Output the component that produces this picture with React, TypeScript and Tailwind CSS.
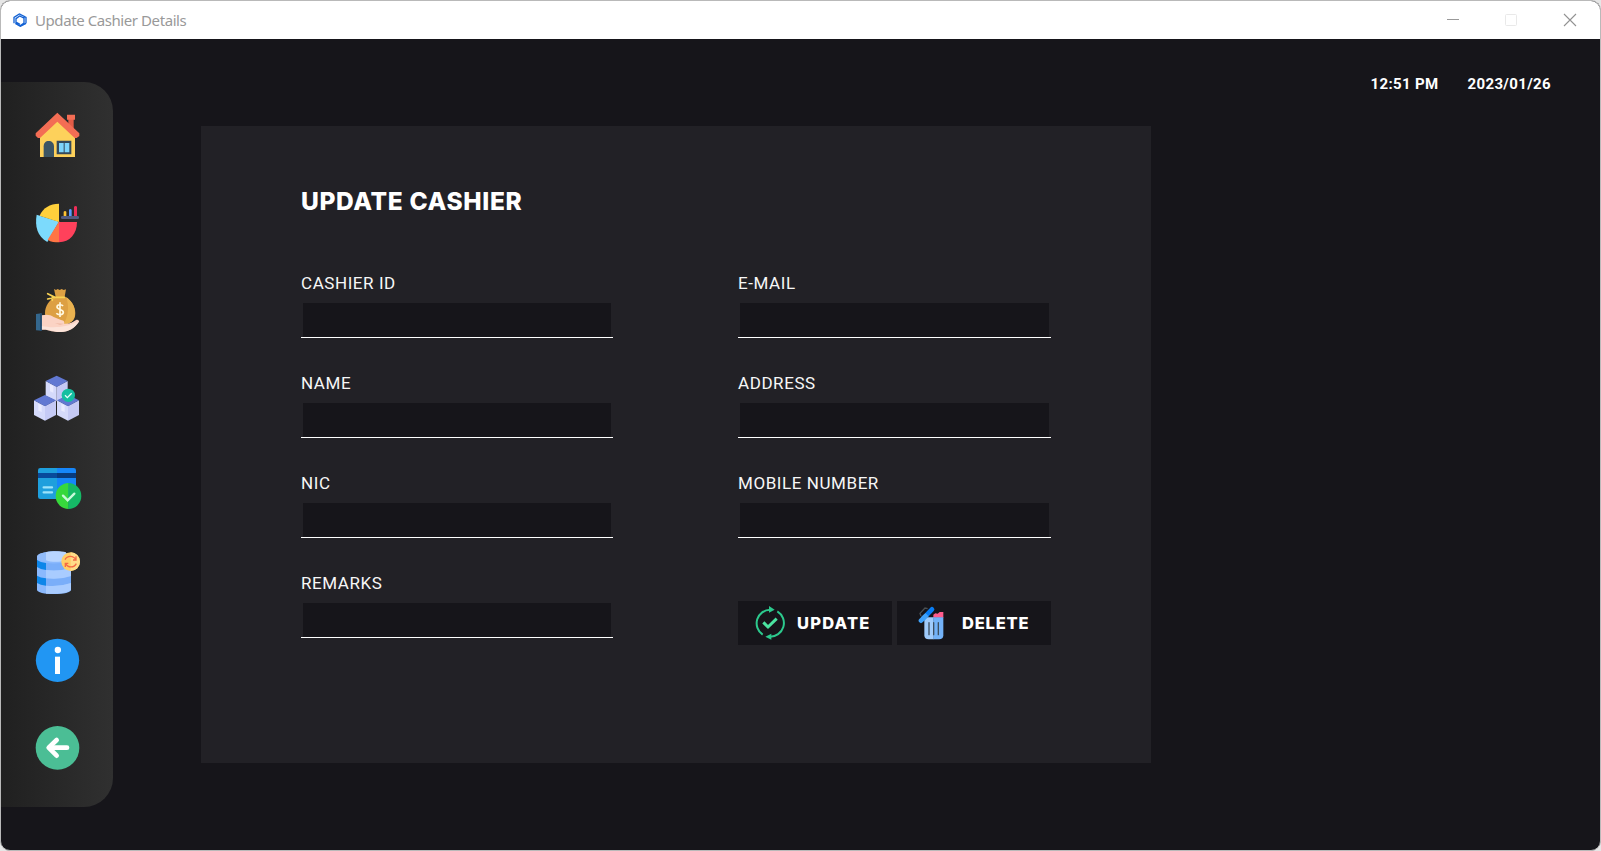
import React from "react";

const HomeIcon = () => (
  <svg className="size-12" viewBox="36 33 144 144">
    <path fill="#e25c47" d="M145 55h16v34l-16-14z" />
    <path fill="#f36d54" d="M141 44h24v15h-24z" />
    <path fill="#fdd15b" d="M60 171V100l52-43 53 43v71z" />
    <path fill="#fbc04f" d="M66 100l47-38 47 38v-8l-47-38-47 38z" />
    <path fill="#f36d54" d="M112 38l66 62v8l-8 6h-6l-52-49-52 49h-6l-7-7v-7z" />
    <path fill="#3c5564" d="M71 171v-32c0-10 6-16 15-16s16 6 16 16v32z" />
    <path fill="#34495a" d="M110 122h44v41h-44z" />
    <path fill="#7ed5fb" d="M117 129h14v28h-14zM134 129h14v28h-14z" />
  </svg>
);

const ChartIcon = () => (
  <svg className="size-12" viewBox="36 297 144 144">
    <path fill="#7cdafc" d="M117 365L50 344c-6 36 2 64 32 82z" />
    <path fill="#ffd03b" d="M117 366V311c-27 0-49 13-58 36z" />
    <path fill="#ff7544" d="M118 363l-35 56c10 7 22 8 34 8z" />
    <path fill="#ff415b" d="M117 366h54c0 36-22 60-54 61z" />
    <path fill="#ffc431" d="M131 335q4-4 8 0v13h-8z" />
    <path fill="#5a9cff" d="M147 329q4-4 8 0v19h-8z" />
    <path fill="#ee2d58" d="M162 320q5-4 9 0v28h-9z" />
    <rect x="123" y="348" width="54" height="9" rx="4" fill="#525b80" />
  </svg>
);

const MoneyIcon = () => (
  <svg className="size-12" viewBox="36 33 144 144">
    <path fill="#dda043" d="M102 42l6 3 5-3 6 3 6-3 6 3 7-2-4 22c18 9 32 27 32 50 0 24-18 35-46 35s-45-12-45-35c0-23 14-41 32-50z" />
    <path fill="#e9b250" d="M138 66c16 10 27 27 27 49 0 22-14 33-37 35 17-20 21-57 10-84z" />
    <path fill="none" stroke="#f9d153" strokeWidth="5" strokeLinecap="round" d="M134 67H105L83 56M105 67l-22 5M97 66v10" />
    <path fill="none" stroke="#fff8df" strokeWidth="5" d="M129 93c-3-5-18-6-18 3 0 9 19 6 19 16 0 9-16 9-21 3M120 82v44" />
    <path fill="#fbd3c4" d="M65 121c14-4 26-2 36 5l22 9c8 1 12 6 9 11 14 2 25-3 36-11 5-3 10 1 9 5-13 19-29 30-54 31-22 1-35-5-46-7H65z" />
    <path fill="#fce4da" d="M65 153c22 4 62 10 112-14-12 20-31 32-57 32-18 0-30-6-43-8H65z" />
    <path fill="#f1bda9" d="M105 144l27 2-12 4z" />
    <path fill="#34678d" d="M48 117l17-2v52l-17-1z" />
    <path fill="#254e70" d="M60 116h5v51h-5z" />
  </svg>
);

const StockIcon = () => {
  const cubes: [number, number][] = [[110, 302], [75, 360], [144, 360]];
  return (
    <svg className="size-12" viewBox="36 297 144 144">
      {cubes.map(([x, y]) => (
        <g key={`${x}-${y}`} transform={`translate(${x} ${y})`}>
          <path fill="#d5dafb" d="M-33 16L0 33v44l-33-17z" />
          <path fill="#c5caf5" d="M33 16L0 33v44l33-17z" />
          <path fill="#6178d2" d="M0 0l33 16L0 34l-33-18z" />
          <path fill="#e9ebff" d="M-20 26l10 5v20l-10-4z" />
        </g>
      ))}
      <circle cx="145" cy="361" r="20" fill="#14bfa0" />
      <path fill="none" stroke="#e8fff9" strokeWidth="4" d="M135 361l7 7 13-13" />
    </svg>
  );
};

const CardIcon = () => (
  <svg className="size-12 overflow-visible" viewBox="36 18 144 144">
    <path fill="#1e9fdd" d="M61 39h50v93H61q-7 0-7-7V46q0-7 7-7z" />
    <path fill="#1686f9" d="M111 39h50q7 0 7 7v86h-57z" />
    <path fill="#084a9b" d="M54 54h57v15H54z" />
    <path fill="#083b7d" d="M111 54h57v15h-57z" />
    <path stroke="#9ce3fb" strokeWidth="7" strokeLinecap="round" d="M71 97h25M71 112h25" />
    <path fill="#37d83c" d="M146 84a39 39 0 0 0 0 78z" />
    <path fill="#15b966" d="M145 84a39 39 0 0 1 0 78z" />
    <path fill="none" stroke="#c9fadb" strokeWidth="7" strokeLinecap="round" d="M129 122l14 14 20-20" />
  </svg>
);

const DatabaseIcon = () => (
  <svg className="size-12 overflow-visible" viewBox="36 282 144 144">
    <path fill="#8bb9fd" d="M51 305c0-9 22-15 51-15s51 6 51 15v99c0 8-22 13-51 13s-51-5-51-13z" />
    <path fill="#0d86e9" d="M51 315q10 7 27 9v21q-17-2-27-9zM51 362q10 6 27 8v22q-17-2-27-8z" />
    <path fill="#7aaef9" d="M78 324q40 5 75-7v21q-33 12-75 7zM78 370q40 5 75-7v21q-33 12-75 8z" />
    <path fill="#a9ccff" d="M78 345q40 5 75-7v25q-33 12-75 7zM78 392q40 4 75-8v20c-8 9-35 14-75 12z" />
    <ellipse cx="102" cy="305" rx="51" ry="16" fill="#92bdfb" />
    <path fill="#b8d5ff" d="M78 292c15-4 45-4 60 0v24c-20 6-43 6-60 0z" />
    <circle cx="152" cy="320" r="28" fill="#ffce67" />
    <path fill="#ffdd88" d="M152 292a28 28 0 0 1 0 56z" />
    <path fill="none" stroke="#f46a46" strokeWidth="4" d="M135 314a18 18 0 0 1 32 0M169 326a18 18 0 0 1-32 0M168 304v11h-9M136 336v-11h9" />
  </svg>
);

const InfoIcon = () => (
  <svg className="size-12" viewBox="36 33 144 144">
    <circle cx="112.5" cy="106" r="65" fill="#2196f3" />
    <circle cx="113.500" cy="75" r="9.500" fill="#fff" />
    <path fill="#fff" d="M105 95h15v52h-15z" />
  </svg>
);

const BackIcon = () => (
  <svg className="size-12" viewBox="36 297 144 144">
    <circle cx="112.5" cy="368.500" r="65.500" fill="#4bbe95" />
    <path fill="none" stroke="#fff" strokeWidth="14" strokeLinecap="round" strokeLinejoin="round" d="M110 345l-24 23 24 24" />
    <path stroke="#fff" strokeWidth="14" strokeLinecap="round" d="M90 368h51" />
  </svg>
);

const UpdateIcon = () => (
  <svg className="h-[34px] w-[31px]" viewBox="106 107 93 102" fill="none">
    <path stroke="#2cc98d" strokeWidth="6" d="M129 193A41 41 0 0 1 152 118M173 123A41 41 0 0 1 150 199" />
    <path fill="#2cc98d" d="M148 107l17 11-17 9zM155 190l-18 9 18 9z" />
    <path stroke="#4be3a0" strokeWidth="9" d="M131 156l14 14 26-25" />
  </svg>
);

const TrashIcon = () => (
  <svg className="h-[34px] w-[26px]" viewBox="596 107 78 102">
    <path fill="none" stroke="#4a5054" strokeWidth="4" d="M605 137l-3-8 15-16 8 2" />
    <path fill="#ff5c8d" d="M642 142v-9l6-4 7 1 6-5h11v17z" />
    <path fill="#a0cbfb" d="M615 141h28v66h-15q-13 0-13-12z" />
    <path fill="#73b2f8" d="M642 141h30v54q0 12-13 12h-17z" />
    <path stroke="#3d4f61" strokeWidth="4" strokeLinecap="round" d="M629 157v36M643 157v36M657 157v36" />
    <path stroke="#087df5" strokeWidth="14" strokeLinecap="round" d="M623 133l15-16" />
    <path stroke="#40a2fb" strokeWidth="14" strokeLinecap="round" d="M605 151l12-12" />
    <path stroke="#40a2fb" strokeWidth="14" d="M610 146l13-13" />
  </svg>
);

const AppLogo = () => (
  <svg className="size-[14px]" viewBox="0 0 42 42" fill="none" stroke="#1261d4" strokeWidth="4">
    <path d="M3 31V13L19 3l16 8M9 33V17l11-8 12 6M20 3l19 10v18M33 12v18L20 39M39 31L22 40 7 31M10 28l11 6" />
  </svg>
);

const navIcons = [HomeIcon, ChartIcon, MoneyIcon, StockIcon, CardIcon, DatabaseIcon, InfoIcon, BackIcon];

function Field({ label }: { label: string }) {
  return (
    <label className="flex h-[100px] flex-col">
      <span className="flex h-8 items-start text-[17px] leading-6 tracking-[0.57px] text-[#f7f7f7]">{label}</span>
      <span className="flex h-[35px] border-b border-white px-[2px]">
        <input aria-label={label} className="h-[34px] w-full bg-[#16151a] px-2 text-white outline-none" />
      </span>
    </label>
  );
}

export default function App() {
  return (
    <div className="h-[851px] w-[1601px] bg-[#e6e6e6]">
      <div className="flex h-full flex-col overflow-hidden rounded-[10px] border border-[#b9b9b9] bg-[#16151a] font-['Roboto',sans-serif]">
        <header className="flex h-[38px] shrink-0 items-center bg-white pl-3">
          <AppLogo />
          <h1 className="ml-[8px] flex-1 font-['Noto_Sans',sans-serif] text-[15px] tracking-[-0.42px] text-[#999]">Update Cashier Details</h1>
          <svg className="h-[38px] w-[175px]" viewBox="0 0 175 38" fill="none">
            <path stroke="#999" d="M22 18.500h12" />
            <rect x="80.500" y="13.500" width="11" height="11" rx="1" stroke="#e9e9e9" />
            <path stroke="#929292" strokeWidth="1.100" d="M139 13l12 12M151 13l-12 12" />
          </svg>
        </header>
        <div className="flex flex-1">
          <aside className="mt-[43px] flex h-[725px] w-28 flex-col items-center gap-[39.5px] rounded-r-[29px] bg-linear-to-r from-[#202020] to-[#303030] pt-[29px] pr-[2px]">
            {navIcons.map((Icon, i) => (
              <button key={i} className="size-12 shrink-0">
                <Icon />
              </button>
            ))}
          </aside>
          <main className="ml-[88px] mt-[87px] h-[637px] w-[950px] bg-[#222126] px-[100px] pt-[57px]">
            <h2 className="h-[88px] font-['Inter',sans-serif] text-[24.5px] leading-9 font-extrabold tracking-[0.65px] text-white">UPDATE CASHIER</h2>
            <div className="flex justify-between">
              <section className="w-[312px]">
                {["CASHIER ID", "NAME", "NIC", "REMARKS"].map((l) => (
                  <Field key={l} label={l} />
                ))}
              </section>
              <section className="w-[313px]">
                {["E-MAIL", "ADDRESS", "MOBILE NUMBER"].map((l) => (
                  <Field key={l} label={l} />
                ))}
                <div className="mt-[30px] flex justify-between font-['Inter',sans-serif] text-[16.5px] font-extrabold tracking-[1.2px] text-white">
                  <button className="flex h-11 w-[154px] items-center bg-[#16151a] pl-[17px]">
                    <UpdateIcon />
                    <span className="ml-[11px]">UPDATE</span>
                  </button>
                  <button className="flex h-11 w-[154px] items-center bg-[#16151a] pl-[21px]">
                    <TrashIcon />
                    <span className="ml-[18px] tracking-[0.8px]">DELETE</span>
                  </button>
                </div>
              </section>
            </div>
          </main>
          <div className="ml-auto mt-[33px] mr-[49px] flex gap-[29px] text-[15px] leading-6 font-bold tracking-[0.35px] text-white">
            <time>12:51 PM</time>
            <time>2023/01/26</time>
          </div>
        </div>
      </div>
    </div>
  );
}
